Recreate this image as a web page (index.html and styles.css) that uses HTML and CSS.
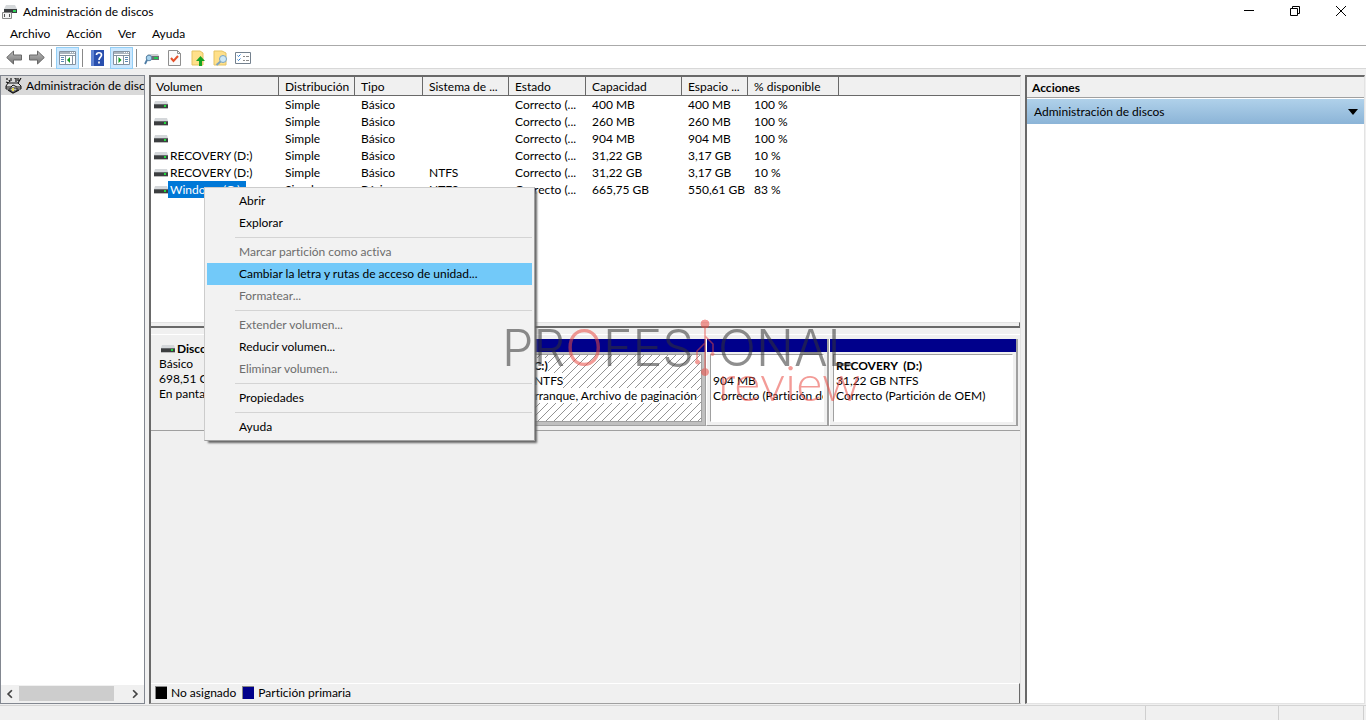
FILE: index.html
```html
<!DOCTYPE html>
<html lang="es">
<head>
<meta charset="utf-8">
<title>Administración de discos</title>
<link rel="stylesheet" href="styles.css">
</head>
<body>
<svg class="defs" aria-hidden="true">
  <defs>
    <linearGradient id="steel" x1="0" y1="0" x2="0" y2="1"><stop offset="0" stop-color="#bcbcbc"/><stop offset="1" stop-color="#747474"/></linearGradient>
    <pattern id="hatch" width="8" height="8" patternUnits="userSpaceOnUse"><path d="M-1 9L9 -1M-1 1L1 -1M7 9L9 7" stroke="#777" stroke-width=".8"/></pattern>
    <symbol id="drive" viewBox="0 0 14 8"><path d="M1 0h12l1 3H0z" fill="#d4d7da"/><path d="M0 3h14v4H0z" fill="#3c3e40"/><path d="M0 3h14v1H0z" fill="#66696c"/><path d="M0 7h14v1H0z" fill="#bbb"/><path d="M10 4h2v2h-2z" fill="#1fdc3c"/></symbol>
    <symbol id="panel" viewBox="0 0 17 14"><path d="M.5.5h16v13H.5z" fill="#fff" stroke="#8592a0"/><path d="M1 1h15v2H1z" fill="#aab4be"/><path d="M11 1.500h1M13 1.500h1M15 1.500h1" stroke="#fff"/><path d="M1 4.500h15" stroke="#8592a0"/></symbol>
  </defs>
</svg>
<div class="window">
  <header class="titlebar">
    <svg class="app-icon" viewBox="0 0 16 16"><path d="M4 1h9l2 4H2z" fill="#d5d8da"/><path d="M2 5h13v4H2z" fill="#3a3d40"/><path d="M11 6h3v2h-3z" fill="#2ed158"/><path d="M.5 8.500h9v6h-9z" fill="#f4f4f4" stroke="#888"/><path d="M2 10h1v3H2zM7 10h1v3H7z" fill="#555"/></svg>
    <h1 class="title">Administración de discos</h1>
    <div class="controls">
      <button class="control" aria-label="Minimizar"><svg viewBox="0 0 12 12"><path d="M1 4.500h10" stroke="#000"/></svg></button>
      <button class="control" aria-label="Restaurar"><svg viewBox="0 0 12 12" fill="none" stroke="#000"><path d="M1.500 2.500h7v7h-7zM3.500 2.500v-2h7v7h-2"/></svg></button>
      <button class="control" aria-label="Cerrar"><svg viewBox="0 0 12 12"><path d="M1 0l10 10M11 0L1 10" stroke="#000"/></svg></button>
    </div>
  </header>
  <nav class="menubar">
    <button>Archivo</button><button>Acción</button><button>Ver</button><button>Ayuda</button>
  </nav>
  <div class="toolbar">
    <button class="tool" aria-label="Atrás"><svg width="17" height="15" viewBox="0 0 17 15"><path d="M.7 7.500L7.500 1v4h8v5h-8v4z" fill="url(#steel)" stroke="#686868"/></svg></button>
    <button class="tool" aria-label="Adelante"><svg width="17" height="15" viewBox="0 0 17 15"><path d="M15.300 7.500L8.500 1v4h-8v5h8v4z" fill="url(#steel)" stroke="#686868"/></svg></button>
    <span class="divider"></span>
    <button class="tool pressed" aria-label="Mostrar árbol"><svg width="17" height="14" viewBox="0 0 17 14"><use href="#panel"/><path d="M6.500 5v8" stroke="#8592a0"/><path d="M2 6.500h3M2 8.500h3M2 10.500h3" stroke="#5b88b4"/><path d="M11 6v6L8 9z" fill="#129c22"/><path d="M13.500 5v8" stroke="#8592a0"/></svg></button>
    <span class="divider"></span>
    <button class="tool" aria-label="Ayuda"><svg width="13" height="16" viewBox="0 0 13 16"><path d="M0 0h13v16H0z" fill="#294fae"/><path d="M0 0h3v16H0z" fill="#5f83d2"/><path d="M5.500 5c0-3 5-3 5 0 0 2-2.500 2.200-2.500 5M8 11.500v2" fill="none" stroke="#fff" stroke-width="1.700"/></svg></button>
    <button class="tool pressed" aria-label="Mostrar acciones"><svg width="17" height="14" viewBox="0 0 17 14"><use href="#panel"/><path d="M10.500 5v8M3.500 5v8" stroke="#8592a0"/><path d="M12 6.500h3M12 8.500h3M12 10.500h3" stroke="#5b88b4"/><path d="M5.500 6v6l3-3z" fill="#129c22"/></svg></button>
    <span class="divider"></span>
    <button class="tool" aria-label="Examinar disco"><svg width="16" height="14" viewBox="0 0 16 14"><path d="M4 3h10l1 2H3z" fill="#ccd0d3"/><path d="M2 5h13v4H2z" fill="#6b6f73"/><path d="M10 6h4v2h-4z" fill="#22c553"/><circle cx="5" cy="7" r="2.800" fill="#a8d3ee" stroke="#5c87a8"/><path d="M3 9l-2 4" stroke="#4d7ca5" stroke-width="1.800"/></svg></button>
    <button class="tool" aria-label="Comprobar"><svg width="13" height="16" viewBox="0 0 13 16"><path d="M.5.5h9l3 3v12H.5z" fill="#fafafa" stroke="#8e8e8e"/><path d="M9.500.5v3h3" fill="none" stroke="#8e8e8e"/><path d="M3 8l2.500 3L10 6" fill="none" stroke="#e5512a" stroke-width="2"/></svg></button>
    <button class="tool" aria-label="Subir carpeta"><svg width="14" height="16" viewBox="0 0 14 16"><path d="M1 1h8l3 2v12H1z" fill="#ffe08a" stroke="#e5c363"/><path d="M9.500 6L14 11h-3v5H8v-5H5z" fill="#16a321"/></svg></button>
    <button class="tool" aria-label="Buscar"><svg width="15" height="16" viewBox="0 0 15 16"><path d="M1 1h8l4 2v12H1z" fill="#ffe08a" stroke="#e5c363"/><circle cx="10" cy="9" r="3.500" fill="#cde8f6" stroke="#7aa4c2"/><path d="M7.500 11.500L3.500 15" stroke="#7fa4bd" stroke-width="2"/></svg></button>
    <button class="tool" aria-label="Opciones"><svg width="17" height="14" viewBox="0 0 17 14"><path d="M.5 1.500h15v11H.5z" fill="#fff" stroke="#74818e"/><path d="M2.500 4.500l1 1 2-2M2.500 8.500l1 1 2-2" fill="none" stroke="#2678d0"/><path d="M8 5.500h2M11 5.500h3M8 9.500h2M11 9.500h3" stroke="#8b8b8b"/></svg></button>
  </div>

  <main class="workspace">
    <aside class="tree">
      <div class="tree-item">
        <svg width="17" height="16" viewBox="0 0 17 16"><path d="M2 0v2M4 2l1 2M6 0v3M9 0h2v4M13 0v3M16 0l-3 5M1 4l3 1" fill="none" stroke="#111" stroke-width="1.200"/><path d="M3 5h10l3 3v3H1V8z" fill="#ddd" stroke="#111"/><path d="M1 9h5l2-2 4 2h4" fill="none" stroke="#111"/><path d="M5 10h7v3H5z" fill="#bbb" stroke="#222"/><path d="M3 12l5 3 6-3" fill="none" stroke="#111" stroke-width="1.200"/><path d="M7 10h2v3H7z" fill="#e5d84b"/></svg>
        <span>Administración de discos</span>
      </div>
      <div class="scrollbar">
        <button aria-label="Desplazar a la izquierda"><svg viewBox="0 0 8 8"><path d="M5.500 1L2.500 4l3 3" fill="none" stroke="#444" stroke-width="1.400"/></svg></button>
        <div class="track"><div class="thumb"></div></div>
        <button aria-label="Desplazar a la derecha"><svg viewBox="0 0 8 8"><path d="M2.500 1l3 3-3 3" fill="none" stroke="#444" stroke-width="1.400"/></svg></button>
      </div>
    </aside>

    <section class="content">
      <div class="volumes">
        <table>
          <colgroup><col class="c-vol"><col class="c-dist"><col class="c-type"><col class="c-fs"><col class="c-state"><col class="c-cap"><col class="c-free"><col class="c-pct"><col></colgroup>
          <thead><tr><th>Volumen</th><th>Distribución</th><th>Tipo</th><th>Sistema de ...</th><th>Estado</th><th>Capacidad</th><th>Espacio ...</th><th>% disponible</th><th></th></tr></thead>
          <tbody>
            <tr><td><svg class="drive"><use href="#drive"/></svg></td><td>Simple</td><td>Básico</td><td></td><td>Correcto (...</td><td>400 MB</td><td>400 MB</td><td>100 %</td><td></td></tr>
            <tr><td><svg class="drive"><use href="#drive"/></svg></td><td>Simple</td><td>Básico</td><td></td><td>Correcto (...</td><td>260 MB</td><td>260 MB</td><td>100 %</td><td></td></tr>
            <tr><td><svg class="drive"><use href="#drive"/></svg></td><td>Simple</td><td>Básico</td><td></td><td>Correcto (...</td><td>904 MB</td><td>904 MB</td><td>100 %</td><td></td></tr>
            <tr><td><svg class="drive"><use href="#drive"/></svg><span class="name">RECOVERY (D:)</span></td><td>Simple</td><td>Básico</td><td></td><td>Correcto (...</td><td>31,22 GB</td><td>3,17 GB</td><td>10 %</td><td></td></tr>
            <tr><td><svg class="drive"><use href="#drive"/></svg><span class="name">RECOVERY (D:)</span></td><td>Simple</td><td>Básico</td><td>NTFS</td><td>Correcto (...</td><td>31,22 GB</td><td>3,17 GB</td><td>10 %</td><td></td></tr>
            <tr><td><svg class="drive"><use href="#drive"/></svg><span class="name selected">Windows (C:)</span></td><td>Simple</td><td>Básico</td><td>NTFS</td><td>Correcto (...</td><td>665,75 GB</td><td>550,61 GB</td><td>83 %</td><td></td></tr>
          </tbody>
        </table>
      </div>
      <div class="splitter"></div>
      <div class="disks">
        <div class="disk">
          <div class="disk-info">
            <strong><svg class="drive"><use href="#drive"/></svg>Disco 0</strong>
            <span>Básico</span><span>698,51 GB</span><span>En pantalla</span>
          </div>
          <div class="partitions">
            <div class="partition windows"><div class="bar"></div><div class="frame"><svg class="hatch"><rect width="100%" height="100%" fill="url(#hatch)"/></svg><div class="details"><strong>Windows&nbsp; (C:)</strong><span>665,75 GB NTFS</span><span>Correcto (Arranque, Archivo de paginación</span></div></div></div>
            <div class="partition small"><div class="bar"></div><div class="frame"><div class="details"><strong>&nbsp;</strong><span>904 MB</span><span>Correcto (Partición de recuperación)</span></div></div></div>
            <div class="partition recovery"><div class="bar"></div><div class="frame"><div class="details"><strong>RECOVERY&nbsp; (D:)</strong><span>31,22 GB NTFS</span><span>Correcto (Partición de OEM)</span></div></div></div>
          </div>
        </div>
      </div>
      <footer class="legend"><span class="key black"></span><span>No asignado</span><span class="key navy"></span><span>Partición primaria</span></footer>
    </section>

    <aside class="actions">
      <h2>Acciones</h2>
      <button class="action-head"><span>Administración de discos</span><svg width="10" height="6" viewBox="0 0 10 6"><path d="M0 0h10L5 6z"/></svg></button>
    </aside>
  </main>
  <footer class="status"><span></span><span></span><span></span></footer>

  <div class="context-menu" role="menu">
    <button>Abrir</button>
    <button>Explorar</button>
    <hr>
    <button disabled>Marcar partición como activa</button>
    <button class="active">Cambiar la letra y rutas de acceso de unidad...</button>
    <button disabled>Formatear...</button>
    <hr>
    <button disabled>Extender volumen...</button>
    <button>Reducir volumen...</button>
    <button disabled>Eliminar volumen...</button>
    <hr>
    <button>Propiedades</button>
    <hr>
    <button>Ayuda</button>
  </div>

  <div class="watermark">
    <span class="mark-left">PR<span class="mark-red">O</span>FES</span>
    <svg class="mark-node" viewBox="0 0 20 60"><g fill="#ea4b43" stroke="#ea4b43"><path d="M10 8v42M10 25L2 33v9M10 18l8 8v8" fill="none" stroke-width="1.500"/><circle cx="10" cy="6" r="4"/><circle cx="10" cy="54" r="3.500"/><circle cx="2.500" cy="44" r="2"/><circle cx="17.500" cy="36" r="1.500"/></g></svg>
    <span class="mark-right">ONAL</span>
    <span class="mark-review">review</span>
  </div>
</div>
</body>
</html>
```
FILE: styles.css
```css
* { box-sizing: border-box; }
body { margin: 0; background: #fff; color: #000; font: 12px/16px Lato, "Open Sans", sans-serif; font-variant-ligatures: none; }
button { margin: 0; padding: 0; border: 0; background: none; color: inherit; font: inherit; font-variant-ligatures: none; }
h1, h2 { margin: 0; font-size: 12px; }
svg { display: block; flex: none; }
.defs { position: absolute; width: 0; height: 0; }

.window { position: relative; display: flex; flex-direction: column; height: 100vh; overflow: hidden; }
.titlebar { display: flex; align-items: center; height: 24px; padding-left: 2px; flex: none; }
.app-icon { width: 16px; height: 16px; }
.title { margin-left: 5px; font-weight: 400; }
.controls { display: flex; margin-left: auto; padding-right: 2px; }
.control { display: grid; place-items: center; width: 46px; height: 22px; }
.control svg { width: 12px; height: 12px; }
.menubar { display: flex; align-items: flex-start; gap: 16px; height: 22px; padding: 2px 10px 0; border-bottom: 1px solid #aaa; flex: none; }
.toolbar { display: flex; align-items: center; gap: 2px; height: 23px; padding: 1px 0 0 4px; border-bottom: 1px solid #d8d8d8; flex: none; }
.tool { display: grid; place-items: center; width: 21px; height: 22px; }
.tool.pressed { width: 23px; border: 1px solid #93cef5; background: #cce8ff; }
.divider { width: 1px; height: 18px; margin: 0 2px 0 1px; background: #888; }

.workspace { display: grid; grid-template-columns: 145px 1fr 340px; gap: 4px; flex: 1; min-height: 0; padding: 6px 1px 1px 0; background: #f0f0f0; border-bottom: 1px solid #d4d4d4; }
.tree { display: flex; flex-direction: column; justify-content: space-between; min-width: 0; border: 1px solid #828790; background: #fff; }
.tree-item { display: flex; align-items: center; gap: 4px; height: 19px; padding-left: 4px; overflow: hidden; background: #d9d9d9; white-space: nowrap; }
.scrollbar { display: flex; height: 18px; background: #f0f0f0; }
.scrollbar button { display: grid; place-items: center; width: 18px; }
.scrollbar svg { width: 10px; height: 10px; }
.track { flex: 1; }
.thumb { width: 89%; height: 15px; margin-top: 1px; background: #cdcdcd; }

.content { display: flex; flex-direction: column; min-width: 0; border: 1px solid #a0a0a0; border-left: 2px solid #696969; border-top: 2px solid #696969; border-right-color: #e3e3e3; background: #f0f0f0; }
.volumes { height: 245px; flex: none; background: #fff; }
table { width: 100%; table-layout: fixed; border-collapse: separate; border-spacing: 0; }
th, td { overflow: hidden; padding: 0 6px; text-align: left; white-space: nowrap; font-weight: 400; }
th { height: 19px; padding-top: 1px; border-right: 1px solid #696969; border-bottom: 1px solid #696969; background: #f0f0f0; }
th:last-child { border-right: 0; }
td { height: 17px; line-height: 17px; }
th:first-child { padding-left: 5px; }
td:first-child { display: flex; align-items: center; padding: 0 0 0 3px; }
.c-vol { width: 128px; } .c-dist { width: 76px; } .c-type { width: 68px; } .c-fs { width: 86px; } .c-state { width: 77px; } .c-cap { width: 96px; } .c-free { width: 66px; } .c-pct { width: 91px; }
th:nth-child(n+2), td:nth-child(n+2) { padding-right: 0; }
.drive { width: 14px; height: 8px; }
.name { padding: 0 2px; }
.name.selected { padding-right: 6px; background: #0078d7; color: #fff; }
.splitter { height: 6px; flex: none; border-top: 1px solid #e3e3e3; border-bottom: 2px solid #696969; border-right: 1px solid #696969; }
.disks { flex: 1; padding-top: 6px; min-height: 0; }
.disk { display: flex; height: 97px; padding: 4px 2px 4px 0; border-top: 1px solid #fff; border-bottom: 1px solid #a0a0a0; }
.disk-info { display: flex; flex-direction: column; width: 105px; padding: 2px 0 0 8px; line-height: 15px; flex: none; }
.disk-info strong { display: flex; align-items: center; gap: 2px; padding-left: 2px; }
.partitions { display: flex; flex: 1; min-width: 0; }
.partition { display: flex; flex-direction: column; border-right: 2px solid #a0a0a0; border-bottom: 1px solid #a0a0a0; min-width: 0; }
.partition.windows { flex: 1; border-right-width: 1px; background: #c0c0c0; }
.partition.small { width: 123px; border-left: 1px solid #fff; }
.partition.recovery { width: 189px; border-left: 1px solid #fff; }
.bar { height: 13px; flex: none; background: #00008b; }
.frame { position: relative; display: flex; flex: 1; margin: 2px 3px 3px; border: 1px solid #a0a0a0; border-right-color: #fff; border-bottom-color: #fff; background: #fff; overflow: hidden; }
.windows .frame { border-right-color: #a0a0a0; border-bottom-color: #a0a0a0; }
.hatch { position: absolute; inset: 0; width: 100%; height: 100%; }
.details { position: relative; display: flex; flex-direction: column; align-items: flex-start; min-width: 0; padding: 3px 1px 0 2px; line-height: 15px; white-space: nowrap; }
.windows .details { margin-left: auto; padding-right: 4px; }
.windows .details > * { background: #fff; }
.small .details { overflow: hidden; }
.legend { display: flex; align-items: center; gap: 4px; height: 20px; flex: none; padding: 0 4px 2px; border-top: 1px solid #fff; border-right: 1px solid #696969; }
.key { width: 12px; height: 13px; border-top: 1px solid #888; border-left: 1px solid #888; }
.black { background: #000; }
.navy { margin-left: 2px; background: #00008b; }

.actions { min-width: 0; border: 1px solid #e3e3e3; border-left: 2px solid #696969; border-top: 2px solid #696969; background: #fff; }
.actions h2 { height: 21px; padding: 3px 5px 1px; border-bottom: 1px solid #a0a0a0; background: #f0f0f0; }
.action-head { display: flex; align-items: center; justify-content: space-between; width: 100%; height: 25px; padding: 0 6px 0 7px; margin-top: 1px; background: linear-gradient(#b0d1ea, #8bb4d7); }

.status { display: flex; justify-content: flex-end; height: 14px; padding-right: 2px; flex: none; background: #f0f0f0; }
.status span { border-right: 1px solid #cfcfcf; }
.status span:nth-child(2) { width: 133px; }
.status span:nth-child(3) { width: 85px; }

.context-menu { position: absolute; left: 204px; top: 187px; width: 331px; padding: 2px; border: 1px solid #a0a0a0; border-top-color: #ccc; border-left-color: #ccc; background: #f2f2f2; box-shadow: 3px 3px 2px -1px #666; }
.context-menu button { display: block; width: 100%; height: 22px; padding: 0 32px; text-align: left; }
.context-menu button:disabled { color: #6d6d6d; }
.context-menu .active { background: #72c9f9; }
.context-menu hr { height: 1px; margin: 3px 0 3px 28px; border: 0; background: #d4d4d4; }

.watermark { position: absolute; left: 502px; top: 318px; width: 362px; height: 90px; color: #333; font: 300 50px/60px Inter, "Open Sans", sans-serif; opacity: .55; pointer-events: none; }
.watermark > * { position: absolute; }
.mark-left { left: 0; top: 0; }
.mark-node { left: 193px; top: 0; width: 20px; height: 60px; }
.mark-right { left: 216px; top: 0; }
.mark-red, .mark-review { color: #ea4b43; }
.mark-review { left: 216px; top: 34px; font-family: Lato, "Open Sans", sans-serif; }
```
